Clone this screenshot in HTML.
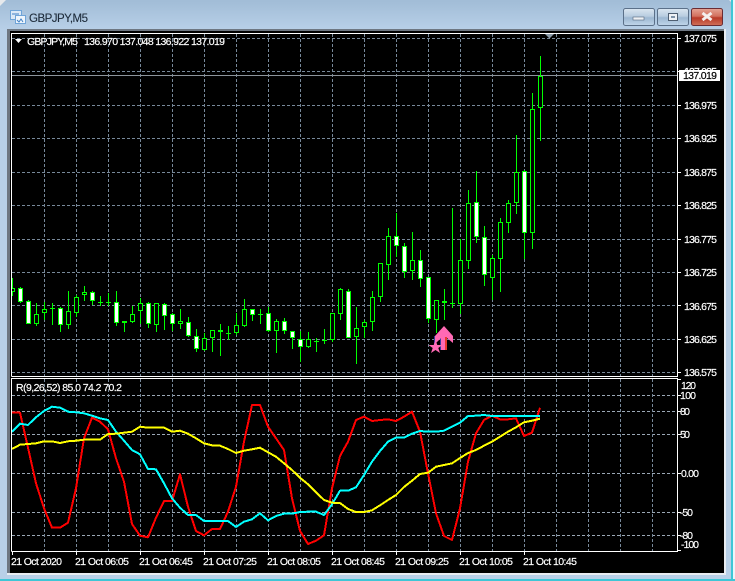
<!DOCTYPE html>
<html><head><meta charset="utf-8"><title>GBPJPY,M5</title>
<style>
html,body{margin:0;padding:0;background:#b8d0e8;width:735px;height:581px;overflow:hidden}
svg{display:block}
text{font-family:"Liberation Sans",sans-serif;font-size:10.5px;fill:#fff;stroke:#fff;stroke-width:.18px}
</style></head><body>
<svg width="735" height="581" viewBox="0 0 735 581" xmlns="http://www.w3.org/2000/svg">
<defs>
<linearGradient id="tb" x1="0" y1="0" x2="0" y2="1"><stop offset="0" stop-color="#a2bdd7"/><stop offset=".06" stop-color="#a2bdd7"/><stop offset="1" stop-color="#b8d0e8"/></linearGradient>
<linearGradient id="bt" x1="0" y1="0" x2="0" y2="1"><stop offset="0" stop-color="#dbe6f1"/><stop offset=".45" stop-color="#b9cde0"/><stop offset=".55" stop-color="#9db8d2"/><stop offset="1" stop-color="#c0d6ea"/></linearGradient>
<linearGradient id="cl" x1="0" y1="0" x2="0" y2="1"><stop offset="0" stop-color="#e5a595"/><stop offset=".45" stop-color="#d2705e"/><stop offset=".55" stop-color="#b83a28"/><stop offset="1" stop-color="#d0705a"/></linearGradient>
<clipPath id="pm"><rect x="12" y="34" width="665" height="342"/></clipPath>
<clipPath id="po"><rect x="12" y="379" width="665" height="172"/></clipPath>
</defs>
<!-- window -->
<rect width="735" height="581" fill="#b8d0e8"/>
<rect width="735" height="30" fill="url(#tb)"/>
<path d="M0 0h6L0 6z" fill="#e6e9ec"/><path d="M735 0h-6l6 6z" fill="#e6e9ec"/>
<rect x="731" y="0" width="2" height="581" fill="#3fc6d6"/><rect x="733" y="0" width="2" height="581" fill="#eef4f8"/>
<rect x="0" y="579" width="735" height="2" fill="#3fc6d6"/>
<!-- title -->
<rect x="10.500" y="10.500" width="11" height="9" fill="#dbe9f7" stroke="#6fa4d8"/>
<rect x="15.500" y="15.500" width="10" height="8" fill="#eef5fc" stroke="#6fa4d8"/>
<path d="M12 14h7M17 20l2 2 2-3 2 3" stroke="#3f7fc4" fill="none"/>
<text x="29" y="22" style="font-size:11.500px;fill:#1d2b3a;stroke:#1d2b3a;stroke-width:.1px" textLength="59">GBPJPY,M5</text>
<!-- buttons -->
<rect x="623.500" y="8.500" width="31" height="17" rx="2" fill="url(#bt)" stroke="#5b7089"/>
<rect x="633" y="17" width="11" height="3" fill="#eef1f5" stroke="#55677c" stroke-width=".6"/>
<rect x="657.500" y="8.500" width="31" height="17" rx="2" fill="url(#bt)" stroke="#5b7089"/>
<rect x="668.500" y="13.500" width="9" height="7" fill="#eef1f5" stroke="#4f5f72"/><rect x="671" y="16" width="4" height="2" fill="#7f93a8"/>
<rect x="691.500" y="8.500" width="31" height="17" rx="2" fill="url(#cl)" stroke="#6b2c33"/>
<path d="M702.500 13l9 7M711.500 13l-9 7" stroke="#f4efee" stroke-width="3"/>
<!-- chart area -->
<rect x="7" y="29" width="719" height="546" fill="#e8edf2"/>
<rect x="7" y="29" width="717" height="2" fill="#6e7782"/>
<rect x="7" y="29" width="3" height="544" fill="#6e7782"/>
<rect x="10" y="31" width="714" height="542" fill="#000"/>

<!-- main grid -->
<g stroke="#778899" stroke-dasharray="3 2" fill="none" shape-rendering="crispEdges" clip-path="url(#pm)">
<path d="M12 38.500H677M12 71.500H677M12 105.500H677M12 138.500H677M12 172.500H677M12 205.500H677M12 239.500H677M12 272.500H677M12 305.500H677M12 339.500H677M12 372.500H677"/>
<path d="M44.500 34V376M76.500 34V376M108.500 34V376M140.500 34V376M172.500 34V376M204.500 34V376M236.500 34V376M268.500 34V376M300.500 34V376M332.500 34V376M364.500 34V376M396.500 34V376M428.500 34V376M460.500 34V376M492.500 34V376M524.500 34V376M556.500 34V376M588.500 34V376M620.500 34V376M652.500 34V376"/>
</g>
<path d="M12 75.500H678" stroke="#8c949c" shape-rendering="crispEdges"/>
<path d="M545 34h9l-4.500 4.500z" fill="#8a9aa8"/>

<!-- candles -->
<g clip-path="url(#pm)" shape-rendering="crispEdges" stroke="#00ff00" stroke-width="1">
<path fill="none" d="M12.500 278V296M20.500 287V303M28.500 300V324M36.500 303V326M44.500 302V320M52.500 303V325M60.500 307V332M68.500 291V329M76.500 295V317M84.500 286V301M92.500 291V305M100.500 296V306M108.500 293V306M116.500 291V326M124.500 321V332M132.500 306V323M140.500 298V324M148.500 302V328M156.500 303V332M164.500 303V330M172.500 313V331M180.500 309V329M188.500 317V337M196.500 329V352M204.500 333V351M212.500 330V352M220.500 324V356M228.500 326V340M236.500 313V335M244.500 299V327M252.500 309V321M260.500 309V324M268.500 307V332M276.500 319V353M284.500 318V334M292.500 331V349M300.500 331V362M308.500 332V348M316.500 338V352M324.500 329V344M332.500 313V342M340.500 288V320M348.500 289V338M356.500 307V364M364.500 320V338M372.500 291V331M380.500 263V302M388.500 228V280M396.500 213V257M404.500 243V278M412.500 232V280M420.500 250V287M428.500 277V323M436.500 300V333M444.500 289V320M452.500 208V308M460.500 239V314M468.500 190V269M476.500 171V243M484.500 226V286M492.500 255V300M500.500 218V292M508.500 200V233M516.500 135V214M524.500 170V259M532.500 93V249M540.500 56V141"/>
<path fill="none" d="M50 308.500h5M98 302.500h5M106 302.500h5M226 333.500h5M258 314.500h5M314 341.500h5M322 340.500h5M450 303.500h5"/>
<path fill="#000" d="M10.500 288.500h4v3h-4zM34.500 314.500h4v9h-4zM42.500 309.500h4v3h-4zM66.500 311.500h4v13h-4zM74.500 297.500h4v15h-4zM82.500 292.500h4v2h-4zM122.500 321.500h4v1h-4zM130.500 314.500h4v7h-4zM138.500 303.500h4v7h-4zM154.500 303.500h4v21h-4zM178.500 321.500h4v2h-4zM202.500 338.500h4v11h-4zM210.500 330.500h4v7h-4zM234.500 325.500h4v7h-4zM242.500 309.500h4v16h-4zM274.500 321.500h4v9h-4zM306.500 339.500h4v7h-4zM330.500 313.500h4v26h-4zM338.500 289.500h4v24h-4zM354.500 328.500h4v8h-4zM362.500 322.500h4v4h-4zM370.500 297.500h4v24h-4zM378.500 263.500h4v33h-4zM386.500 236.500h4v28h-4zM410.500 260.500h4v10h-4zM434.500 300.500h4v19h-4zM458.500 260.500h4v43h-4zM466.500 203.500h4v57h-4zM490.500 258.500h4v19h-4zM498.500 222.500h4v36h-4zM506.500 203.500h4v19h-4zM514.500 172.500h4v30h-4zM530.500 109.500h4v123h-4zM538.500 76.500h4v31h-4z"/>
<path fill="#fff" d="M18.500 288.500h4v13h-4zM26.500 301.500h4v22h-4zM58.500 308.500h4v16h-4zM90.500 292.500h4v8h-4zM114.500 302.500h4v20h-4zM146.500 303.500h4v20h-4zM162.500 304.500h4v11h-4zM170.500 314.500h4v9h-4zM186.500 322.500h4v13h-4zM194.500 336.500h4v12h-4zM218.500 330.500h4v1h-4zM250.500 309.500h4v5h-4zM266.500 313.500h4v17h-4zM282.500 321.500h4v9h-4zM290.500 331.500h4v6h-4zM298.500 339.500h4v7h-4zM346.500 291.500h4v46h-4zM394.500 236.500h4v9h-4zM402.500 246.500h4v25h-4zM418.500 260.500h4v18h-4zM426.500 277.500h4v41h-4zM442.500 301.500h4v1h-4zM474.500 202.500h4v34h-4zM482.500 237.500h4v37h-4zM522.500 171.500h4v61h-4z"/>
</g>

<!-- arrow & star -->
<path d="M440 337h1v13h-1zM434 336h1v8h-1z" fill="#3a3a9a"/>
<polygon points="444,326 453,336 453,343 447,338 447,350 441,350 441,338 435,344 435,336" fill="#ff69b4"/>
<rect x="445" y="337" width="2" height="13" fill="#e8382e"/>
<polygon points="435.500,340 437.300,345 442.500,345 438.300,348 440,353 435.500,350 431,353 432.700,348 428.500,345 433.700,345" fill="#ff69b4"/>

<!-- frames -->
<g fill="none" stroke="#fff" shape-rendering="crispEdges">
<path d="M11.500 376.500V33.500H677.500V376.500H11.500"/>
<path d="M11.500 551.500V378.500H677.500V551.500H11.500"/>
<path d="M678 38.500h3M678 71.500h3M678 105.500h3M678 138.500h3M678 172.500h3M678 205.500h3M678 239.500h3M678 272.500h3M678 305.500h3M678 339.500h3M678 372.500h3"/>
<path d="M678 379.500h3M678 395.500h3M678 411.500h3M678 434.500h3M678 473.500h3M678 512.500h3M678 535.500h3M678 550.500h3"/>
<path d="M12.500 552v3M76.500 552v3M140.500 552v3M204.500 552v3M268.500 552v3M332.500 552v3M396.500 552v3M460.500 552v3M524.500 552v3"/>
</g>

<!-- osc grid -->
<g stroke="#778899" stroke-dasharray="3 2" fill="none" shape-rendering="crispEdges" clip-path="url(#po)">
<path stroke="#9aa7b5" d="M12 395.500H677M12 411.500H677M12 434.500H677M12 473.500H677M12 512.500H677M12 535.500H677"/>
<path d="M44.500 379V551M76.500 379V551M108.500 379V551M140.500 379V551M172.500 379V551M204.500 379V551M236.500 379V551M268.500 379V551M300.500 379V551M332.500 379V551M364.500 379V551M396.500 379V551M428.500 379V551M460.500 379V551M492.500 379V551M524.500 379V551M556.500 379V551M588.500 379V551M620.500 379V551M652.500 379V551"/>
</g>

<!-- osc lines -->
<g fill="none" stroke-width="2" stroke-linejoin="round" clip-path="url(#po)" shape-rendering="crispEdges">
<polyline stroke="#ff0000" points="12,412.700 20,412.700 28,447.700 36,483.300 44,508.300 52,527.700 60,527.700 68,522.700 76,488.300 84,438.300 92,417.700 100,421.700 108,429.300 116,458.300 124,481.700 132,524 140,535.700 148,537.300 156,517.700 164,501 172,501 180,474.300 188,506.700 196,531 204,535.300 212,529 220,529 228,511.700 236,486.700 244,441.700 252,405 260,405 268,426.700 276,438.300 284,450 292,498.300 300,531 308,544 316,540.700 324,535.300 332,488.300 340,456 348,441.700 356,420 364,416.700 372,421 380,420 388,419.300 396,421 404,416.700 412,411.700 420,431.700 428,473.300 436,513.300 444,536 452,540 460,508.300 468,461.700 476,433.300 484,420 492,415.700 500,419.300 508,419.300 516,418.300 524,436 532,432.700 540,407.700"/>
<polyline stroke="#00ffff" points="12,431.700 20,423.700 28,425 36,417.300 44,411 52,406.700 60,407.700 68,411.700 76,412.300 84,413.300 92,415.700 100,418.300 108,420 116,431.700 124,440.700 132,450 140,454.300 148,469 156,469.300 164,483.300 172,498.300 180,507.700 188,515 196,515 204,521 212,521 220,521 228,521 236,527 244,521.700 252,519.300 260,513.300 268,520.300 276,516 284,513.700 292,513.700 300,512 308,511.700 316,511.700 324,515 332,504.300 340,490.700 348,490.700 356,487.300 364,475 372,461.700 380,451 388,441.700 396,437.700 404,437.700 412,433.700 420,431 428,431.700 436,431.700 444,430.700 452,426.700 460,422.700 468,416 476,415.700 484,415 492,416 500,416 508,416 516,416 524,416 532,416 540,416"/>
<polyline stroke="#ffff00" points="12,449 20,444.700 28,444 36,443.300 44,441.300 52,441.300 60,443 68,441.300 76,440.700 84,439.700 92,439.700 100,439.700 108,434 116,433.700 124,432.700 132,431.700 140,426.700 148,427.700 156,427.700 164,427.700 172,431.700 180,430.700 188,433.700 196,438.300 204,443.300 212,445.300 220,445.700 228,449 236,453 244,450.700 252,449.300 260,447.700 268,452.300 276,456.700 284,463.300 292,470 300,477.700 308,484.300 316,492.300 324,500 332,502.700 340,503 348,509 356,512 364,512 372,510.300 380,505.300 388,500 396,495 404,487 412,480.700 420,474 428,472.700 436,466.700 444,465 452,463.300 460,458 468,453 476,450 484,445.700 492,441.700 500,436.700 508,431.700 516,427.300 524,422.300 532,420.700 540,418.700"/>
</g>

<!-- labels -->
<path d="M15 39h7l-3.500 4z" fill="#fff"/>
<text x="27" y="45" textLength="51">GBPJPY,M5</text>
<text x="84" y="45" textLength="141">136.970 137.048 136.922 137.019</text>
<text x="16" y="391" textLength="106">R(9,26,52) 85.0 74.2 70.2</text>

<g>
<text x="684" y="42" textLength="33">137.075</text>
<text x="684" y="75" textLength="33">137.025</text>
<text x="684" y="109" textLength="33">136.975</text>
<text x="684" y="142" textLength="33">136.925</text>
<text x="684" y="176" textLength="33">136.875</text>
<text x="684" y="209" textLength="33">136.825</text>
<text x="684" y="243" textLength="33">136.775</text>
<text x="684" y="276" textLength="33">136.725</text>
<text x="684" y="310" textLength="33">136.675</text>
<text x="684" y="343" textLength="33">136.625</text>
<text x="684" y="376" textLength="33">136.575</text>
</g>
<rect x="679" y="70" width="41" height="11" fill="#fff"/>
<text x="683" y="79" textLength="34" style="fill:#000;stroke:#000">137.019</text>

<text x="681" y="389" textLength="15">120</text>
<text x="680" y="399" textLength="16">100</text>
<text x="680" y="415" textLength="10">80</text>
<text x="680" y="438" textLength="10">50</text>
<text x="681" y="477" textLength="18">0.00</text>
<text x="680" y="516" textLength="13">-50</text>
<text x="680" y="539" textLength="13">-80</text>
<text x="681" y="548" textLength="18">-100</text>

<text x="11" y="565" textLength="51">21 Oct 2020</text>
<text x="75" y="565" textLength="54">21 Oct 06:05</text>
<text x="139" y="565" textLength="54">21 Oct 06:45</text>
<text x="203" y="565" textLength="54">21 Oct 07:25</text>
<text x="267" y="565" textLength="54">21 Oct 08:05</text>
<text x="331" y="565" textLength="54">21 Oct 08:45</text>
<text x="395" y="565" textLength="54">21 Oct 09:25</text>
<text x="459" y="565" textLength="54">21 Oct 10:05</text>
<text x="523" y="565" textLength="54">21 Oct 10:45</text>
</svg>
</body></html>
